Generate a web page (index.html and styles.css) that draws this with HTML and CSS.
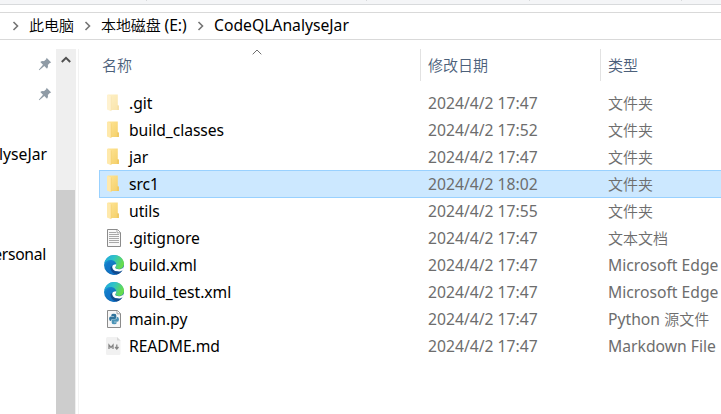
FILE: index.html
```html
<!DOCTYPE html>
<html lang="zh-CN">
<head>
<meta charset="utf-8">
<title>CodeQLAnalyseJar</title>
<link rel="stylesheet" href="styles.css">
</head>
<body>
<svg class="defs" width="0" height="0" aria-hidden="true">
  <defs>
    <linearGradient id="fg" x1="0" y1="0" x2="1" y2="1"><stop offset="0" stop-color="#ffe596"/><stop offset="1" stop-color="#f4cf68"/></linearGradient>
    <linearGradient id="eb" x1="0" y1="0" x2="0.6" y2="1"><stop offset="0" stop-color="#1b9de2"/><stop offset="1" stop-color="#0c59a4"/></linearGradient>
    <linearGradient id="et" x1="0" y1="0" x2="1" y2="0.35"><stop offset="0" stop-color="#1fa5dc"/><stop offset="0.5" stop-color="#2fc3c8"/><stop offset="1" stop-color="#66dc4d"/></linearGradient>
    <symbol id="folder" viewBox="0 0 20 20">
      <path d="M4 1.500h9.800v10.800l1 .7v4H4z" fill="url(#fg)"/>
      <path d="M13 12.500h2V17h-2z" fill="#f0ca66"/>
      <path d="M3 1.500l4.200 2v14.800L3 16.500z" fill="#ffe9ab"/>
      <path d="M7.200 3.500v14.300" stroke="#efc75e" stroke-width=".5"/>
    </symbol>
    <symbol id="doc" viewBox="0 0 20 20">
      <path d="M3.500 1.500h10l3 3v14h-13z" fill="#f8f8f8" stroke="#8b8b8b"/>
      <path d="M13 1.500v3.300h3.500" fill="#fff" stroke="#8b8b8b" stroke-width=".8"/>
      <path d="M5 4.500h7M5 6.500h10M5 8.500h10M5 10.500h10M5 12.500h10M5 14.500h10" stroke="#a8a8a8"/>
    </symbol>
    <symbol id="edge" viewBox="0 0 20 20">
      <circle cx="10" cy="10" r="10" fill="url(#eb)"/>
      <path d="M.2 9C1.200 3.400 5.200 0 10.200 0 16 0 20 4.200 20 8.700c0 3.600-2.600 5.400-5.200 5.400-2.200 0-3.500-.8-3.500-1.500 0-.6 1-1 1-2.800C12.300 7.200 9.900 5 6.700 5 3.400 5 1.200 7 .2 9z" fill="url(#et)"/>
      <path d="M6.700 9.400C5.300 13 7.800 19 13.300 19.400 8 21 1.500 16.500 2.200 10.800 2.500 8.300 4.500 6.500 7.400 6.300 5.600 7.200 7 8.600 6.700 9.400z" fill="#1177cb" opacity=".8"/>
      <path d="M12.300 9.300c0 2-1.100 2.600-1.100 3.300 0 1 1.500 1.700 3.600 1.700 1.900 0 3.500-.7 4.700-2.100l.5.800c-.6 1.600-1.800 3.100-3.300 4-4 .3-8.600-1.200-8.600-4.900 0-1.700 1.600-2.800 4.200-2.800z" fill="#fff"/>
      <path d="M8.200 10.900c-.7 3.300 2.700 6 6.200 5.700 1.700-.1 3-.8 4-1.400-1 2-3.300 3.800-5.700 4.200C9 19 6 15.500 6.600 12z" fill="#114b8f"/>
    </symbol>
    <symbol id="py" viewBox="0 0 20 20">
      <path d="M3.500 1.500h10l3 3v14h-13z" fill="#f7f7f7" stroke="#8b8b8b"/>
      <path d="M13 1.500v3.300h3.500" fill="#fff" stroke="#8b8b8b" stroke-width=".8"/>
      <path d="M7.300 6.200q0-1.400 2.500-1.400t2.500 1.400v2.600q0 1.100-1.200 1.100H8.600q-1.500 0-1.500 2.200-2 .2-2-2.300t2-2.300h3v-.5H7.300z" fill="#31749c"/>
      <path d="M12.700 13.800q0 1.500-2.500 1.500t-2.500-1.500v-2.400q0-1.100 1.200-1.100h2.500q1.500 0 1.500-2.500 2.100 0 2.100 2.500t-2 2.500h-3v.5h2.700z" fill="#4b94b7"/>
    </symbol>
    <symbol id="md" viewBox="0 0 20 20">
      <path d="M3.500 1h9.500L16.500 4.500v13a1.500 1.500 0 0 1-1.500 1.500h-11.500A1.500 1.500 0 0 1 2 17.500v-15A1.500 1.500 0 0 1 3.500 1z" fill="#f1f1f1"/>
      <path d="M13 1l3.500 3.500H13z" fill="#d7d7d7"/>
      <path d="M5 13V9l2 2.400 2-2.400v4M12.800 8.500v4M11.100 11l1.700 2 1.700-2" fill="none" stroke="#858585" stroke-width="1.300"/>
    </symbol>
    <symbol id="pin" viewBox="0 0 14 14">
      <path d="M8.600.8l4.600 4.600-1.400.5-2 2.200c.5 1.500.1 2.700-.8 3.600L6.300 9 1.300 13.200.8 12.700 5 7.700 2.300 5c1-.9 2.300-1.200 3.600-.8l2.300-2z" fill="#8f9ba6"/>
    </symbol>
    <symbol id="sep" viewBox="0 0 8 10"><path d="M1.500 1l4 4-4 4" fill="none" stroke="#747474" stroke-width="1.600"/></symbol>
  </defs>
</svg>
<div class="window">
  <div class="ribbon"><i></i><i></i><i></i><i></i></div>
  <nav class="address">
    <svg class="sep"><use href="#sep"/></svg><span class="crumb pc cjk">此电脑</span>
    <svg class="sep"><use href="#sep"/></svg><span class="crumb disk"><span class="cjk">本地磁盘</span> (E:)</span>
    <svg class="sep"><use href="#sep"/></svg><span class="crumb">CodeQLAnalyseJar</span>
  </nav>
  <div class="content">
    <aside class="side">
      <div class="item"><svg class="pin"><use href="#pin"/></svg></div>
      <div class="item"><svg class="pin"><use href="#pin"/></svg></div>
      <div class="item"></div>
      <div class="item lyse">lyseJar</div>
      <div class="item personal">ersonal</div>
    </aside>
    <div class="scroll">
      <svg class="up" viewBox="0 0 10 7"><path d="M.8 6L5 1.800 9.200 6" fill="none" stroke="#505050" stroke-width="2"/></svg>
      <div class="thumb"></div>
    </div>
    <main class="files">
      <div class="head cjk">
        <span>名称<svg class="sort" viewBox="0 0 10 6"><path d="M.7 5.300L5 1l4.300 4.300" fill="none" stroke="#6e6e6e"/></svg></span><span>修改日期</span><span>类型</span>
      </div>
      <div class="row"><svg class="icon hidden-folder"><use href="#folder"/></svg><span class="name">.git</span><span class="date">2024/4/2 17:47</span><span class="cjk">文件夹</span></div>
      <div class="row"><svg class="icon"><use href="#folder"/></svg><span class="name">build_classes</span><span class="date">2024/4/2 17:52</span><span class="cjk">文件夹</span></div>
      <div class="row"><svg class="icon"><use href="#folder"/></svg><span class="name">jar</span><span class="date">2024/4/2 17:47</span><span class="cjk">文件夹</span></div>
      <div class="row selected"><svg class="icon"><use href="#folder"/></svg><span class="name">src1</span><span class="date">2024/4/2 18:02</span><span class="cjk">文件夹</span></div>
      <div class="row"><svg class="icon"><use href="#folder"/></svg><span class="name">utils</span><span class="date">2024/4/2 17:55</span><span class="cjk">文件夹</span></div>
      <div class="row"><svg class="icon"><use href="#doc"/></svg><span class="name">.gitignore</span><span class="date">2024/4/2 17:47</span><span class="cjk">文本文档</span></div>
      <div class="row"><svg class="icon"><use href="#edge"/></svg><span class="name">build.xml</span><span class="date">2024/4/2 17:47</span><span class="type">Microsoft Edge</span></div>
      <div class="row"><svg class="icon"><use href="#edge"/></svg><span class="name">build_test.xml</span><span class="date">2024/4/2 17:47</span><span class="type">Microsoft Edge</span></div>
      <div class="row"><svg class="icon"><use href="#py"/></svg><span class="name">main.py</span><span class="date">2024/4/2 17:47</span><span>Python <span class="cjk">源文件</span></span></div>
      <div class="row"><svg class="icon"><use href="#md"/></svg><span class="name">README.md</span><span class="date">2024/4/2 17:47</span><span class="type">Markdown File</span></div>
    </main>
  </div>
</div>
</body>
</html>
```
FILE: styles.css
```css
* { box-sizing: border-box; }
body {
  margin: 0;
  background: #fff;
  color: #000;
  font: 15.7px/27px "Noto Sans", "Noto Sans CJK SC", sans-serif;
  overflow: hidden;
}
.defs { position: absolute; }
.cjk { font-family: "Noto Sans CJK SC", sans-serif; font-size: 15px; font-weight: 350; }
.window { height: 414px; display: flex; flex-direction: column; white-space: nowrap; }
.ribbon {
  height: 5px;
  background: #f4f5f7;
  border-bottom: 1px solid #d8dadc;
  display: grid;
  grid-template-columns: 220px 163px 152px 1px;
  padding-left: 146px;
  flex: none;
}
.ribbon i { width: 1px; height: 1px; background: #d8dadc; }
.address {
  height: 28px;
  margin-top: 7px;
  border-top: 1px solid #d9d9d9;
  border-bottom: 1px solid #d9d9d9;
  display: flex;
  align-items: center;
  padding-left: 12px;
  flex: none;
}
.sep { width: 8px; height: 10px; flex: none; }
.crumb { margin-left: 9px; line-height: 24px; padding-bottom: 2px; }
.pc { width: 55px; }
.disk { width: 96px; letter-spacing: -0.1px; }
.content { display: flex; flex: 1; padding-top: 9px; min-height: 0; }
.side { width: 56px; overflow: hidden; flex: none; }
.item { height: 30px; display: flex; align-items: center; justify-content: flex-end; }
.pin { width: 14px; height: 14px; margin-right: 4px; }
.lyse { padding: 0 9px 0 0; }
.personal { margin-top: 70px; padding: 1px 10px 0 0; letter-spacing: -0.3px; }
.scroll { width: 20px; background: #efefef; display: flex; flex-direction: column; flex: none; }
.up { width: 10px; height: 7px; margin: 7px 0 0 5px; flex: none; }
.thumb { margin-top: 127px; width: 19px; flex: 1; background: #cdcdcd; }
.files { margin-left: 2px; border-left: 1px solid #f2f2f2; flex: 1; min-width: 0; padding-left: 20px; overflow: hidden; }
.head { display: flex; height: 32px; margin-bottom: 8px; line-height: 31px; color: #4c607a; }
.head span { position: relative; width: 180px; padding-left: 7px; border-left: 1px solid #e2e2e2; flex: none; }
.head span:first-child { width: 321px; padding-left: 3px; border: 0; }
.sort { position: absolute; left: 153px; top: 0; width: 10px; height: 6px; }
.row {
  display: grid;
  grid-template-columns: 25px 299px 180px 1fr;
  align-items: center;
  height: 27px;
  line-height: 25px;
  padding-left: 5px;
  color: #6d6d6d;
}
.selected { height: 28px; margin: 0 -1px -1px 0; background: #cce8ff; border: 1px solid #99d1ff; padding-left: 4px; }
.row .name { color: #000; letter-spacing: -0.06px; }
.name, .date, .type { padding-top: 2px; }
.selected .name, .selected .date { padding-top: 1px; }
.selected .cjk { line-height: 24px; }
.icon { width: 20px; height: 20px; }
.hidden-folder { opacity: .55; }
```
